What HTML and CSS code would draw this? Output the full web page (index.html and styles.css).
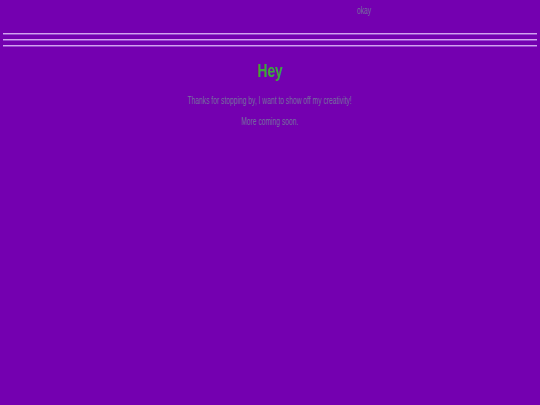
FILE: index.html
```html
<!DOCTYPE html>
<html>
<head>
<meta charset="utf-8">
<link rel="stylesheet" href="styles.css">
</head>
<body>
<div class="top"><span class="okay">okay</span></div>
<div class="rules">
<div class="rule"></div>
<div class="rule"></div>
<div class="rule"></div>
</div>
<main class="content">
<h1 class="title"><span class="narrow">Hey</span></h1>
<p class="text"><span class="narrow">Thanks for stopping by, I want to show off my creativity!</span></p>
<p class="text"><span class="narrow">More coming soon.</span></p>
</main>
</body>
</html>
```
FILE: styles.css
```css
html, body {
  margin: 0;
  padding: 0;
  background: #7400b0;
  height: 100%;
}
body {
  font-family: "Liberation Sans", Arial, sans-serif;
}
.narrow {
  display: inline-block;
  transform: scaleX(0.61);
  transform-origin: center;
  white-space: nowrap;
}
.top {
  height: 33px;
  position: relative;
}
.okay {
  position: absolute;
  left: 357px;
  top: 4px;
  font-size: 11px;
  line-height: 12px;
  color: #75709e;
  display: inline-block;
  transform: scaleX(0.61);
  transform-origin: left center;
}
.rules {
  padding: 0 3px;
  display: flex;
  flex-direction: column;
  gap: 4px;
}
.rule {
  height: 0;
  border-top: 1px solid #d2a2ee;
  border-bottom: 1px solid #9a4ad0;
}
.content {
  text-align: center;
  padding-top: 13px;
}
.title {
  margin: 0;
  font-size: 17.5px;
  font-weight: bold;
  color: #3ca63c;
  line-height: 22px;
}
.title .narrow {
  transform: scaleX(0.78);
}
.text {
  margin: 12px 0 0;
  font-size: 11px;
  line-height: 12px;
  color: #75709e;
}
.text + .text {
  margin-top: 9px;
}
```
